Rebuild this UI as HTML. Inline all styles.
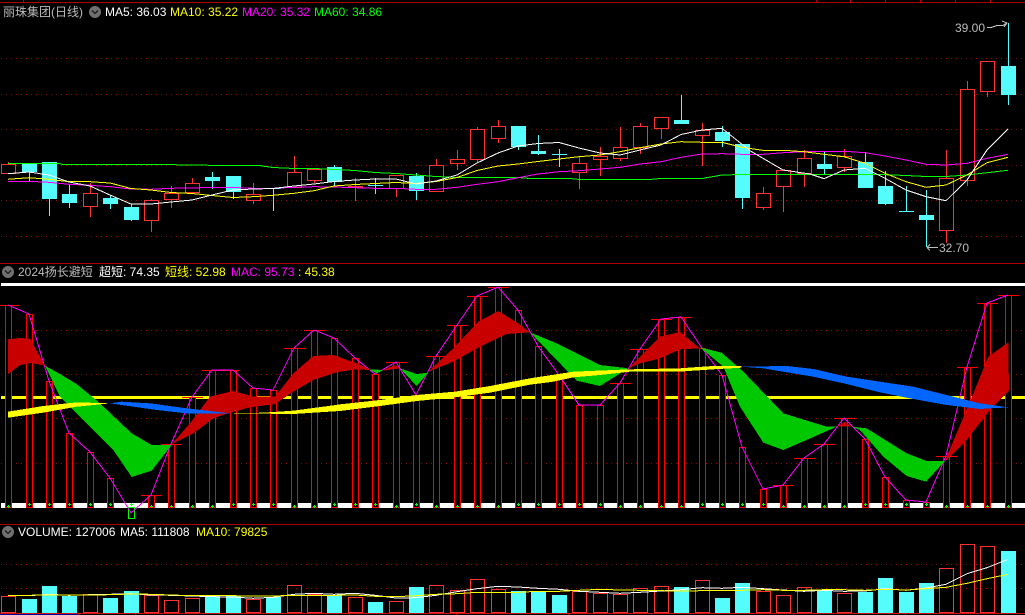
<!DOCTYPE html>
<html><head><meta charset="utf-8"><title>丽珠集团(日线)</title>
<style>
html,body{margin:0;padding:0;background:#000;width:1025px;height:615px;overflow:hidden}
#w{position:relative;width:1025px;height:615px;background:#000;overflow:hidden}
svg{position:absolute;left:0;top:0}
.t{position:absolute;font:12px/14px "Liberation Sans","WenQuanYi Zen Hei","Noto Sans CJK SC",sans-serif;white-space:pre;color:#fff}
.g{color:#bcbcbc}.y{color:#ff0}.m{color:#f0f}.l{color:#0f0}
</style></head><body><div id="w">
<svg width="1025" height="615" viewBox="0 0 1025 615" shape-rendering="crispEdges" fill="none">
<!-- frame lines -->
<path d="M0 2.5H1025M0 263.5H1025M0 524.5H1025" stroke="#b00000"/>
<path d="M0 613.5H1025" stroke="#d01010"/>
<path d="M23.5 0v2M816.5 0v2M850.5 0v2M885.5 0v2M920.5 0v2M955.5 0v2M990.5 0v2M78.5 614v1M135.5 614v1M349.5 614v1M456.5 614v1M568.5 614v1M793.5 614v1M905.5 614v1" stroke="#b00000"/>
<path d="M0 614.5H78" stroke="#000090"/>
<!-- dotted grids -->
<path d="M1 58.5H1025M1 94.5H1025M1 129.5H1025M1 165.5H1025M1 200.5H1025M1 236.5H1025M1 330.5H1025M1 374.5H1025M1 418.5H1025M1 463.5H1025M1 564.5H1025M1 588.5H1025" stroke="#a00000" stroke-dasharray="1 4"/>

<!-- main candles: red -->
<path fill="#000" stroke="#ff3232" d="M1.5 164.5h14v9h-14zM83.5 193.5h14v13h-14zM144.5 200.5h14v20h-14zM164.5 193.5h14v6h-14zM185.5 183.5h14v9h-14zM246.5 194.5h14v6h-14zM287.5 172.5h14v15h-14zM307.5 169.5h14v11h-14zM348.5 186.5h14v1h-14zM389.5 175.5h14v13h-14zM429.5 165.5h14v26h-14zM450.5 159.5h14v4h-14zM470.5 129.5h14v30h-14zM491.5 126.5h14v12h-14zM572.5 163.5h14v9h-14zM593.5 156.5h14v3h-14zM613.5 147.5h14v11h-14zM633.5 126.5h14v21h-14zM654.5 117.5h14v11h-14zM695.5 130.5h14v5h-14zM756.5 193.5h14v14h-14zM776.5 170.5h14v16h-14zM797.5 158.5h14v15h-14zM837.5 156.5h14v11h-14zM939.5 178.5h14v52h-14zM960.5 89.5h14v91h-14zM980.5 61.5h14v30h-14z"/>
<path stroke="#ff3232" d="M8.5 162v2M90.5 183v10M90.5 207v10M151.5 199v1M151.5 221v11M171.5 186v7M171.5 199v9M192.5 178v5M192.5 192v2M253.5 183v11M253.5 201v3M294.5 156v16M314.5 181v2M355.5 178v8M355.5 188v13M396.5 188v9M436.5 159v6M457.5 150v9M457.5 164v6M477.5 127v2M477.5 160v3M498.5 120v6M498.5 139v4M579.5 157v6M579.5 173v16M600.5 147v9M600.5 160v16M620.5 127v20M620.5 159v2M640.5 123v3M640.5 148v6M661.5 129v10M702.5 123v7M702.5 136v30M763.5 187v6M763.5 208v2M783.5 187v25M804.5 150v8M804.5 174v13M844.5 149v7M844.5 168v4M946.5 150v28M946.5 231v12M967.5 81v8M967.5 181v5M987.5 92v5"/>
<!-- main candles: cyan -->
<path stroke="#54fcfc" d="M29.5 172v9M49.5 199v17M69.5 185v23M110.5 195v14M131.5 204v17M212.5 172v17M233.5 192v7M273.5 189v22M334.5 165v22M375.5 178v16M416.5 173v27M518.5 147v3M538.5 135v20M559.5 149v18M681.5 95v25M722.5 126v21M742.5 198v11M824.5 152v22M865.5 152v10M885.5 171v34M906.5 186v25M926.5 190v57M1008.5 23v82"/>
<path fill="#54fcfc" d="M22 164h15v8h-15zM42 162h15v37h-15zM62 194h15v9h-15zM103 198h15v6h-15zM124 207h15v13h-15zM205 177h15v4h-15zM226 176h15v16h-15zM266 188h15v1h-15zM327 167h15v15h-15zM368 185h15v1h-15zM409 176h15v15h-15zM511 126h15v21h-15zM531 151h15v3h-15zM552 154h15v1h-15zM674 120h15v4h-15zM715 132h15v9h-15zM735 144h15v54h-15zM817 164h15v5h-15zM858 162h15v26h-15zM878 186h15v18h-15zM899 211h15v1h-15zM919 215h15v5h-15zM1001 66h15v29h-15z"/>
<!-- MA lines -->
<polyline stroke="#0f0" points="8,163.5 60,163.5 62,164.5 141,164.5 161,164.5 223,165.5 259,165.5 273,167.5 294,168.5 314,168.5 334,169.5 355,170.5 375,172.5 396,173.5 416,175 436,176.5 457,177.5 518,177.5 530,178.5 570,178.5 580,179.5 650,179.5 660,178.5 702,178.5 722,175 742,174.5 880,174.5 906,175.5 926,176.5 946,176.5 967,175 987,172.7 1008,170.3"/>
<polyline stroke="#f0f" points="8,181.3 29,181.3 49,182.3 69,184.3 90,185.3 110,186.7 131,189 151,189.3 171,188.3 192,188 212,187.3 233,187.5 253,188.3 273,188.3 294,187.3 314,186.7 334,187 355,187.7 375,188.3 396,188.3 416,189.3 436,189.3 457,187.3 477,184.3 498,181.7 518,177.7 538,174 559,171.7 579,170.7 600,169 620,167.3 640,164 661,161.7 681,157.3 702,154 722,153.7 742,154.3 763,154.3 783,152.7 804,151.7 824,151.3 844,151.3 865,152.7 885,156 906,160 926,164.3 946,165 967,163.3 987,158.3 1008,154.3"/>
<polyline stroke="#ff0" points="8,179.3 29,177.7 49,179.3 69,181.7 90,181.7 110,183 131,188.5 151,190 171,192.5 192,193.5 212,195.5 233,197.5 253,196.7 273,195.3 294,193.3 314,190.7 334,186 355,184.5 375,183.5 396,182.5 416,183.5 436,181.5 457,177.5 477,170.5 498,166 518,164 538,161.5 559,159 579,156.7 600,155 620,151.7 640,147.7 661,144 681,141.7 702,142.3 722,142.3 742,147.3 763,150.3 783,150.3 804,151.7 824,154.3 844,156.7 865,163.3 885,173.3 906,181.7 926,187.3 946,185 967,175 987,162.7 1008,157.3"/>
<polyline stroke="#fff" points="8,173.7 29,172 49,175 69,182 90,186 110,195 131,204 151,204 171,202 192,200 212,195 233,190 253,189 273,188.5 294,186 314,184 334,181.5 355,180 375,179 396,179 416,184 436,181 457,175 477,163 498,153 518,146 538,143.5 559,142.5 579,148 600,153 620,155 640,150 661,145 681,134.5 702,130 722,128.3 750,150.7 783,170 810,174 824,178.7 844,170 865,168.3 885,178.3 906,190 926,196.7 946,200.7 967,180 987,150 1008,129"/>
<!-- price labels arrows -->
<path stroke="#c0c0c0" d="M987 27.5h4l6-2h6l3-2M1002 21l5 2-3 4M927 247.5h11M927 247.5l3-3M927 247.5l3 3"/>

<!-- panel 2 -->
<rect x="1" y="283" width="1024" height="3" fill="#fff"/>
<rect x="1" y="503" width="1024" height="5" fill="#fff"/>
<rect x="1" y="396" width="1024" height="3" fill="#ff0"/>
<path fill="#000" stroke="#f00" d="M5.5 305.5h6V507.5h-6zM26.5 314.5h6V507.5h-6zM46.5 381.5h6V507.5h-6zM66.5 433.5h6V507.5h-6zM87.5 452.5h6V507.5h-6zM107.5 478.5h6V507.5h-6zM148.5 495.5h6V507.5h-6zM168.5 444.5h6V507.5h-6zM189.5 397.5h6V507.5h-6zM209.5 370.5h6V507.5h-6zM230.5 370.5h6V507.5h-6zM250.5 388.5h6V507.5h-6zM270.5 390.5h6V507.5h-6zM291.5 348.5h6V507.5h-6zM311.5 330.5h6V507.5h-6zM331.5 338.5h6V507.5h-6zM352.5 358.5h6V507.5h-6zM372.5 374.5h6V507.5h-6zM393.5 362.5h6V507.5h-6zM413.5 395.5h6V507.5h-6zM433.5 356.5h6V507.5h-6zM454.5 325.5h6V507.5h-6zM474.5 296.5h6V507.5h-6zM495.5 287.5h6V507.5h-6zM515.5 310.5h6V507.5h-6zM535.5 346.5h6V507.5h-6zM556.5 375.5h6V507.5h-6zM576.5 405.5h6V507.5h-6zM597.5 405.5h6V507.5h-6zM617.5 383.5h6V507.5h-6zM637.5 349.5h6V507.5h-6zM658.5 319.5h6V507.5h-6zM678.5 317.5h6V507.5h-6zM699.5 348.5h6V507.5h-6zM719.5 375.5h6V507.5h-6zM739.5 447.5h6V507.5h-6zM760.5 489.5h6V507.5h-6zM780.5 485.5h6V507.5h-6zM801.5 458.5h6V507.5h-6zM821.5 444.5h6V507.5h-6zM841.5 418.5h6V507.5h-6zM862.5 439.5h6V507.5h-6zM882.5 477.5h6V507.5h-6zM903.5 500.5h6V507.5h-6zM923.5 502.5h6V507.5h-6zM943.5 456.5h6V507.5h-6zM964.5 367.5h6V507.5h-6zM984.5 303.5h6V507.5h-6zM1005.5 295.5h6V507.5h-6z"/>
<path stroke="#0f0" d="M128.5 507.5h6v11h-6z"/>
<path stroke="#f00" d="M-2 305.5h21M141 495.5h21M161 444.5h21M182 397.5h21M202 370.5h21M284 348.5h21M304 330.5h21M386 362.5h21M426 356.5h21M447 325.5h21M467 296.5h21M488 287.5h21M610 383.5h21M630 349.5h21M651 319.5h21M671 317.5h21M773 485.5h21M794 458.5h21M814 444.5h21M834 418.5h21M936 456.5h21M957 367.5h21M977 303.5h21M998 295.5h21M209 370.5h30"/>
<polyline stroke="#f0f" points="8,305 29,314 49,381 69,433 90,452 110,478 131,513 151,495 171,444 192,397 212,370 233,370 253,388 273,390 294,348 314,330 334,338 355,358 375,374 396,362 416,395 436,356 457,325 477,296 498,287 518,310 538,346 559,375 579,405 600,405 620,383 640,349 661,319 681,317 702,348 722,375 742,447 763,489 783,485 804,458 824,444 844,418 865,439 885,477 906,500 926,502 946,456 967,367 987,303 1008,295"/>
<!-- plus markers -->
<path stroke="#0f0" d="M7 506.5h3M8.5 505v3M28 504.5h3M29.5 503v3M48 504.5h3M49.5 503v3M68 504.5h3M69.5 503v3M89 504.5h3M90.5 503v3M109 504.5h3M110.5 503v3M130 504.5h3M131.5 503v3M150 506.5h3M151.5 505v3M170 506.5h3M171.5 505v3M191 506.5h3M192.5 505v3M211 506.5h3M212.5 505v3M232 504.5h3M233.5 503v3M252 504.5h3M253.5 503v3M272 504.5h3M273.5 503v3M293 506.5h3M294.5 505v3M313 506.5h3M314.5 505v3M333 504.5h3M334.5 503v3M354 504.5h3M355.5 503v3M374 504.5h3M375.5 503v3M395 506.5h3M396.5 505v3M415 504.5h3M416.5 503v3M435 506.5h3M436.5 505v3M456 506.5h3M457.5 505v3M476 506.5h3M477.5 505v3M497 506.5h3M498.5 505v3M517 504.5h3M518.5 503v3M537 504.5h3M538.5 503v3M558 504.5h3M559.5 503v3M578 504.5h3M579.5 503v3M599 504.5h3M600.5 503v3M619 506.5h3M620.5 505v3M639 506.5h3M640.5 505v3M660 506.5h3M661.5 505v3M680 506.5h3M681.5 505v3M701 504.5h3M702.5 503v3M721 504.5h3M722.5 503v3M741 504.5h3M742.5 503v3M762 504.5h3M763.5 503v3M782 506.5h3M783.5 505v3M803 506.5h3M804.5 505v3M823 506.5h3M824.5 505v3M843 506.5h3M844.5 505v3M864 504.5h3M865.5 503v3M884 504.5h3M885.5 503v3M905 504.5h3M906.5 503v3M925 504.5h3M926.5 503v3M945 506.5h3M946.5 505v3M966 506.5h3M967.5 505v3M986 506.5h3M987.5 505v3M1007 506.5h3M1008.5 505v3"/>
<!-- ribbons (coordinates at 3x) -->
<g transform="translate(0,260) scale(.33333)" fill="#c80000">
<polygon points="24,238 60,234 90,236 135,317 95,309 60,315 24,343"/>
<polygon points="515,553 570,490 630,410 700,393 760,410 825,410 880,340 940,288 1000,285 1020,292 1070,310 1110,328 1110,330 1070,328 1020,335 1000,340 940,360 880,395 825,432 750,442 690,458 640,475 580,520"/>
<polygon points="1150,330 1185,315 1200,325 1150,332"/>
<polygon points="1285,335 1360,265 1435,185 1495,153 1555,190 1590,217 1520,222 1440,260 1360,305"/>
<polygon points="1885,325 1980,230 2040,216 2100,265 2040,268 1980,295 1920,310"/>
<polygon points="2510,500 2535,485 2555,500"/>
<polygon points="2835,603 2920,400 2965,290 3025,247 3027,392 2970,450 2900,540 2840,600"/>
</g>
<g transform="translate(0,260) scale(.33333)" fill="#00c800">
<polygon points="135,317 185,345 230,372 300,430 395,520 455,555 515,555 455,632 395,651 340,570 280,510 220,450 180,410"/>
<polygon points="1110,328 1150,330 1130,340 1110,330"/>
<polygon points="1200,325 1250,342 1285,338 1250,378"/>
<polygon points="1590,217 1670,250 1800,315 1885,325 1800,378 1730,362 1670,300"/>
<polygon points="2100,262 2165,278 2230,335 2350,460 2480,500 2510,500 2420,540 2350,570 2290,548 2220,440 2170,320"/>
<polygon points="2555,500 2600,505 2720,580 2780,603 2835,603 2778,665 2720,648 2650,590 2580,510"/>
</g>
<g transform="translate(0,260) scale(.33333)" fill="#ff0">
<polygon points="24,455 130,438 230,427 330,430 230,440 130,458 24,473"/>
<polygon points="690,460 790,458 880,452 1000,436 1020,433 1140,420 1250,405 1365,395 1470,378 1590,355 1720,335 1890,328 2040,325 2080,322 2140,318 2225,318 2225,323 2140,328 2080,332 2040,335 1890,335 1800,345 1720,352 1660,365 1590,374 1470,398 1365,412 1250,423 1140,438 1020,453 880,462 790,461 690,461"/>
</g>
<g transform="translate(0,260) scale(.33333)" fill="#0066ff">
<polygon points="330,430 365,425 450,430 560,445 690,460 640,460 560,460 470,450 400,440"/>
<polygon points="2225,320 2360,318 2440,327 2540,350 2640,365 2740,380 2840,405 2940,430 3025,442 2940,447 2840,435 2740,417 2640,397 2540,372 2440,350 2360,337 2290,325"/>
</g>

<!-- volume bars -->
<path fill="#54fcfc" d="M22 599h15v14h-15zM42 586h15v27h-15zM62 596h15v17h-15zM103 598h15v15h-15zM124 591h15v22h-15zM205 596h15v17h-15zM226 596h15v17h-15zM266 597h15v16h-15zM327 595h15v18h-15zM368 602h15v11h-15zM409 587h15v26h-15zM511 591h15v22h-15zM531 592h15v21h-15zM552 595h15v18h-15zM674 587h15v26h-15zM715 598h15v15h-15zM735 583h15v30h-15zM817 590h15v23h-15zM858 592h15v21h-15zM878 578h15v35h-15zM899 592h15v21h-15zM919 583h15v30h-15zM1001 551h15v62h-15z"/>
<path stroke="#ff3232" d="M1.5 596.5h14V612.5h-14zM83.5 594.5h14V612.5h-14zM144.5 595.5h14V612.5h-14zM164.5 600.5h14V612.5h-14zM185.5 598.5h14V612.5h-14zM246.5 599.5h14V612.5h-14zM287.5 585.5h14V612.5h-14zM307.5 594.5h14V612.5h-14zM348.5 597.5h14V612.5h-14zM389.5 601.5h14V612.5h-14zM429.5 585.5h14V612.5h-14zM450.5 590.5h14V612.5h-14zM470.5 579.5h14V612.5h-14zM491.5 589.5h14V612.5h-14zM572.5 591.5h14V612.5h-14zM593.5 593.5h14V612.5h-14zM613.5 594.5h14V612.5h-14zM633.5 588.5h14V612.5h-14zM654.5 586.5h14V612.5h-14zM695.5 580.5h14V612.5h-14zM756.5 591.5h14V612.5h-14zM776.5 595.5h14V612.5h-14zM797.5 587.5h14V612.5h-14zM837.5 593.5h14V612.5h-14zM939.5 568.5h14V612.5h-14zM960.5 544.5h14V612.5h-14zM980.5 546.5h14V612.5h-14z"/>
<polyline stroke="#fff" points="8,595.7 29,595.7 49,594.3 69,595.3 90,594.7 110,594.3 131,593.7 151,595 171,595.3 192,596 212,596.7 233,597 253,598.3 273,597.3 294,594.3 314,593.3 334,594.3 355,593.3 375,595.3 396,598 416,597.7 436,595.3 457,591.7 477,588.7 498,586.3 518,587 538,588.3 559,589.3 579,591.3 600,592.3 620,593.3 640,592.3 661,591 681,589.7 702,587.7 722,588.3 742,587.3 763,588.7 783,590 804,591.3 824,590.3 844,591.3 865,591 885,588.7 906,590.3 926,588 946,584.3 967,573.7 987,567.7 1008,559.3"/>
<polyline stroke="#ff0" points="8,595.7 29,595.3 49,595 69,595 90,595 110,594.7 131,594 151,594.3 171,595 192,595.7 212,595.7 233,595.7 253,596 273,596 294,595.3 314,595.3 334,595.3 355,595 375,596.3 396,596.7 416,595.7 436,594.3 457,593.7 477,592.3 498,592.3 518,592.3 538,591.3 559,591.3 579,590.3 600,589.3 620,590 640,590.3 661,590.7 681,591 702,590.7 722,590.3 742,590.3 763,589.7 783,590.3 804,590.3 824,589.7 844,589.7 865,590.3 885,589.3 906,590 926,588.7 946,587.3 967,583.3 987,578.7 1008,574.3"/>

<!-- collapse icons -->
<g>
<circle cx="95" cy="12" r="6" fill="#707070"/><path d="M92 10.5l3 3 3-3" stroke="#1c1c1c" shape-rendering="auto" stroke-width="1.3"/>
<circle cx="8" cy="272" r="6" fill="#707070"/><path d="M5 270.5l3 3 3-3" stroke="#1c1c1c" shape-rendering="auto" stroke-width="1.3"/>
<circle cx="8" cy="532" r="6" fill="#707070"/><path d="M5 530.5l3 3 3-3" stroke="#1c1c1c" shape-rendering="auto" stroke-width="1.3"/>
</g>
</svg>

<div class="t g" style="left:3px;top:5px">丽珠集团(日线)</div>
<div class="t" style="left:105px;top:5px">MA5: 36.03</div>
<div class="t y" style="left:170px;top:5px">MA10: 35.22</div>
<div class="t m" style="left:242px;top:5px">MA20: 35.32</div>
<div class="t l" style="left:314px;top:5px">MA60: 34.86</div>

<div class="t g" style="left:955px;top:21px">39.00</div>
<div class="t g" style="left:939px;top:241px">32.70</div>

<div class="t g" style="left:18px;top:265px">2024扬长避短</div>
<div class="t" style="left:99px;top:265px">超短: 74.35</div>
<div class="t y" style="left:165px;top:265px">短线: 52.98</div>
<div class="t m" style="left:231px;top:265px">MAC: 95.73</div>
<div class="t y" style="left:298px;top:265px">: 45.38</div>

<div class="t" style="left:18px;top:525px">VOLUME: 127006</div>
<div class="t" style="left:120px;top:525px">MA5: 111808</div>
<div class="t y" style="left:196px;top:525px">MA10: 79825</div>
</div></body></html>
